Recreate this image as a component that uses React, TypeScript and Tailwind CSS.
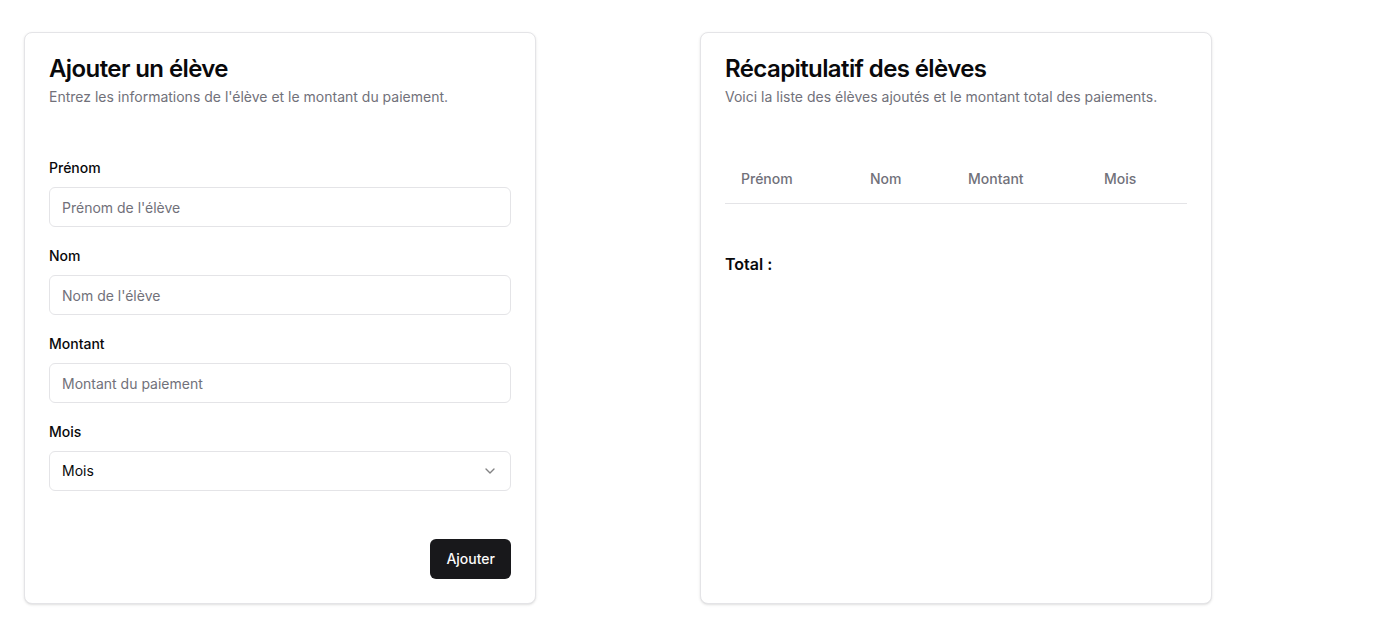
import React from "react";
import { ChevronDown } from "lucide-react";

function Field({ label, placeholder, first }: { label: string; placeholder: string; first?: boolean }) {
  return (
    <div className={first ? "" : "mt-[19px]"}>
      <label className="block text-sm leading-5 font-medium text-[#09090b]">{label}</label>
      <input
        placeholder={placeholder}
        className="mt-[9px] flex h-10 w-full rounded-md border border-[#e4e4e7] bg-white px-3 py-2 text-sm text-[#09090b] placeholder:text-[#71717a] outline-none"
      />
    </div>
  );
}

export default function App() {
  return (
    <div className="min-h-[636px] w-full bg-white" style={{ fontFamily: "Inter, 'Noto Sans', sans-serif" }}>
      <div className="flex gap-[164px] px-6 pt-8">
        <div className="flex h-[572px] w-[512px] flex-col rounded-lg border border-[#e4e4e7] bg-white text-[#09090b] shadow-sm">
          <div className="flex flex-col gap-1.5 p-6">
            <h3 className="text-2xl leading-none font-semibold tracking-tight">Ajouter un élève</h3>
            <p className="text-sm leading-5 text-[#71717a]">Entrez les informations de l'élève et le montant du paiement.</p>
          </div>
          <div className="px-6 pt-[27px]">
            <Field label="Prénom" placeholder="Prénom de l'élève" first />
            <Field label="Nom" placeholder="Nom de l'élève" />
            <Field label="Montant" placeholder="Montant du paiement" />
            <div className="mt-[19px]">
              <label className="block text-sm leading-5 font-medium text-[#09090b]">Mois</label>
              <button className="mt-[9px] flex h-10 w-full items-center justify-between rounded-md border border-[#e4e4e7] bg-white px-3 py-2 text-sm text-[#09090b]">
                <span>Mois</span>
                <ChevronDown className="h-4 w-4 opacity-50" />
              </button>
            </div>
          </div>
          <div className="mt-auto flex justify-end px-6 pb-6">
            <button className="inline-flex h-10 items-center justify-center rounded-md bg-[#18181b] px-4 text-sm font-medium text-[#fafafa]">
              Ajouter
            </button>
          </div>
        </div>

        <div className="flex h-[572px] w-[512px] flex-col rounded-lg border border-[#e4e4e7] bg-white text-[#09090b] shadow-sm">
          <div className="flex flex-col gap-1.5 p-6">
            <h3 className="text-2xl leading-none font-semibold tracking-tight">Récapitulatif des élèves</h3>
            <p className="text-sm leading-5 text-[#71717a]">Voici la liste des élèves ajoutés et le montant total des paiements.</p>
          </div>
          <div className="px-6 pt-6">
            <table className="w-full caption-bottom text-sm">
              <thead>
                <tr className="border-b border-[#e4e4e7]">
                  <th className="h-12 w-[129px] px-4 text-left align-middle font-medium text-[#71717a]">Prénom</th>
                  <th className="h-12 w-[98px] px-4 text-left align-middle font-medium text-[#71717a]">Nom</th>
                  <th className="h-12 w-[136px] px-4 text-left align-middle font-medium text-[#71717a]">Montant</th>
                  <th className="h-12 px-4 text-left align-middle font-medium text-[#71717a]">Mois</th>
                </tr>
              </thead>
              <tbody></tbody>
            </table>
            <div className="mt-[48px] text-base leading-6 font-semibold">Total : </div>
          </div>
        </div>
      </div>
    </div>
  );
}
